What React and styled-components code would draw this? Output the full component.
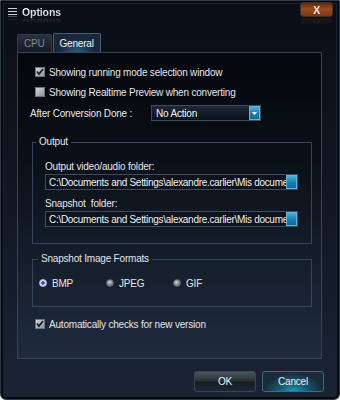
import React from 'react';
import styled, { createGlobalStyle } from 'styled-components';

const GlobalStyle = createGlobalStyle`
  html, body {
    margin: 0;
    padding: 0;
    background: #ffffff;
  }
  body {
    font-family: "Liberation Sans", Arial, sans-serif;
    font-size: 10px;
    letter-spacing: -0.2px;
  }
`;

const Window = styled.div`
  width: 340px;
  height: 400px;
  box-sizing: border-box;
  border: 1px solid #2f3a48;
  border-radius: 0 0 6px 6px;
  background: linear-gradient(180deg, #0a0e16 0%, #0f1520 40%, #1a2434 100%);
  box-shadow: inset 0 0 0 2px #06090e, inset 0 0 0 3px #1a2230;
  display: flex;
  flex-direction: column;
  overflow: hidden;
  color: #e2e5e9;
`;

const TitleBar = styled.div`
  height: 30px;
  display: flex;
  align-items: flex-start;
  padding: 1px 6px 0 7px;
`;

const MenuIcon = styled.div`
  margin-top: 6px;
  width: 9px;
  display: flex;
  flex-direction: column;
  gap: 2px;
  -webkit-box-reflect: below 1px linear-gradient(transparent 30%, rgba(255, 255, 255, 0.35));

  span {
    height: 1px;
    background: #c8d0da;
  }
`;

const Title = styled.div`
  margin: 3px 0 0 5px;
  font-weight: bold;
  font-size: 10.5px;
  letter-spacing: -0.1px;
  line-height: 14px;
  background: linear-gradient(180deg, #ffffff 20%, #a9c2dc 100%);
  -webkit-background-clip: text;
  background-clip: text;
  color: transparent;
  -webkit-box-reflect: below -3px linear-gradient(transparent 45%, rgba(255, 255, 255, 0.3));
`;

const CloseButton = styled.div`
  margin-left: auto;
  width: 33px;
  height: 15px;
  box-sizing: border-box;
  border: 1px solid #4a2a18;
  border-radius: 3px;
  background: linear-gradient(180deg, #5a2a12 0%, #9c4a1e 45%, #7a3616 100%);
  color: #eee6e0;
  font-weight: bold;
  font-size: 11px;
  display: flex;
  align-items: center;
  justify-content: center;
  -webkit-box-reflect: below 1px linear-gradient(transparent 55%, rgba(255, 255, 255, 0.25));
`;

const TabRow = styled.div`
  display: flex;
  align-items: flex-end;
  margin-left: 16px;
  height: 19px;
  margin-top: 1px;
`;

const Tab = styled.div`
  height: ${(p) => (p.$active ? '19px' : '18px')};
  box-sizing: border-box;
  padding: 0 ${(p) => (p.$active ? '6px' : '6px')};
  margin-right: 1px;
  display: flex;
  align-items: center;
  border: 1px solid ${(p) => (p.$active ? '#4a5a70' : '#333d4a')};
  border-bottom: none;
  border-radius: 2px 2px 0 0;
  color: ${(p) => (p.$active ? '#f2f4f6' : '#7d858f')};
  background: ${(p) =>
    p.$active
      ? 'radial-gradient(ellipse at 50% 110%, #2a5f88 0%, #18283c 55%, #1c2636 100%)'
      : 'linear-gradient(180deg, #2a323e 0%, #141a24 100%)'};
`;

const Panel = styled.div`
  margin: 0 17px 0 16px;
  height: 307px;
  box-sizing: border-box;
  border: 1px solid #34445a;
  background: linear-gradient(180deg, #04070c 0%, #0a1018 35%, #1f2b3e 100%);
  display: flex;
  flex-direction: column;
  padding-top: 9px;
`;

const CheckRow = styled.label`
  display: flex;
  align-items: center;
  height: 20px;
  margin-left: 17px;
  margin-top: ${(p) => p.$mt || 0}px;
  gap: 4px;
`;

const Box = styled.span`
  width: 10px;
  height: 10px;
  box-sizing: border-box;
  border: 1px solid #6e747c;
  background: linear-gradient(135deg, #d4d8dc 0%, #8e949b 100%);
  display: flex;
  align-items: center;
  justify-content: center;
`;

const Checkbox = ({ checked }) => (
  <Box>
    {checked && (
      <svg width="8" height="8" viewBox="0 0 8 8">
        <path d="M1 3.5 L3 6 L7 1" stroke="#1c2026" strokeWidth="1.8" fill="none" />
      </svg>
    )}
  </Box>
);

const SelectRow = styled.div`
  display: flex;
  align-items: center;
  margin: 3px 0 0 12px;
`;

const SelectLabel = styled.span`
  width: 121px;
`;

const Select = styled.div`
  width: 110px;
  height: 16px;
  box-sizing: border-box;
  border: 1px solid #3e4c5e;
  background: linear-gradient(180deg, #1e2838 0%, #0c111a 100%);
  display: flex;
  align-items: center;
  padding-left: 4px;
  color: #f0f2f4;
`;

const BlueButton = styled.span`
  flex: none;
  margin-left: auto;
  width: 11px;
  height: 14px;
  box-sizing: border-box;
  border: 1px solid #5fb4dc;
  background: linear-gradient(180deg, #4cb0dc 0%, #1a84b8 50%, #0f6898 100%);
  display: flex;
  align-items: center;
  justify-content: center;
`;

const Group = styled.fieldset`
  margin: ${(p) => p.$mt}px 0 0 14px;
  width: 280px;
  box-sizing: border-box;
  border: 1px solid #34465e;
  padding: 0 13px ${(p) => p.$pb}px 12px;
  min-width: 0;
`;

const Legend = styled.legend`
  margin-left: ${(p) => p.$ml}px;
  padding: 0 3px;
  line-height: 14px;
  color: #e2e5e9;
`;

const FieldLabel = styled.div`
  line-height: 14px;
  margin-top: ${(p) => p.$mt}px;
`;

const PathInput = styled.div`
  height: 16px;
  box-sizing: border-box;
  border: 1px solid #3e4c5e;
  background: #0d131c;
  display: flex;
  align-items: center;
  padding-left: 3px;
  color: #eef0f2;
`;

const PathText = styled.span`
  flex: 1;
  min-width: 0;
  white-space: nowrap;
  overflow: hidden;
  letter-spacing: -0.3px;
`;

const RadioRow = styled.div`
  display: flex;
  align-items: center;
  height: 14px;
  margin-top: 10px;
  margin-left: -6px;
`;

const RadioItem = styled.label`
  display: flex;
  align-items: center;
  gap: 5px;
  width: ${(p) => p.$w}px;
`;

const Radio = styled.span`
  width: 8px;
  height: 8px;
  border-radius: 50%;
  box-sizing: border-box;
  background: ${(p) =>
    p.$on
      ? 'radial-gradient(circle at 50% 50%, #1c4fd8 0%, #1c4fd8 35%, #e8eef6 45%, #9aa6b4 100%)'
      : 'radial-gradient(circle at 40% 35%, #c8ccd2 0%, #80868e 60%, #4a5058 100%)'};
  border: 1px solid ${(p) => (p.$on ? '#b8c6d8' : '#5c636c')};
`;

const Footer = styled.div`
  display: flex;
  justify-content: flex-end;
  gap: 6px;
  margin: 12px 15px 0 0;
`;

const Button = styled.div`
  width: 62px;
  height: 21px;
  box-sizing: border-box;
  border: 1px solid ${(p) => (p.$focus ? '#3e6c80' : '#3c444e')};
  border-radius: 3px;
  display: flex;
  align-items: center;
  justify-content: center;
  color: #eef2f4;
  background: ${(p) =>
    p.$focus
      ? 'radial-gradient(ellipse at 50% 110%, #1ea4c8 0%, #145a74 35%, #1a2a36 70%), linear-gradient(180deg, #4a545e, #141c24)'
      : 'linear-gradient(180deg, #4c545c 0%, #2a3038 48%, #161c22 52%, #1a2a34 100%)'};
`;

const App = () => {
  const path = 'C:\\Documents and Settings\\alexandre.carlier\\Mis documents';
  return (
    <>
      <GlobalStyle />
      <Window>
        <TitleBar>
          <MenuIcon>
            <span />
            <span />
            <span />
          </MenuIcon>
          <Title>Options</Title>
          <CloseButton>X</CloseButton>
        </TitleBar>
        <TabRow>
          <Tab>CPU</Tab>
          <Tab $active>General</Tab>
        </TabRow>
        <Panel>
          <CheckRow>
            <Checkbox checked />
            Showing running mode selection window
          </CheckRow>
          <CheckRow>
            <Checkbox />
            Showing Realtime Preview when converting
          </CheckRow>
          <SelectRow>
            <SelectLabel>After Conversion Done :</SelectLabel>
            <Select>
              No Action
              <BlueButton>
                <svg width="5" height="3" viewBox="0 0 5 3">
                  <path d="M0 0 H5 L2.5 3 Z" fill="#ffffff" />
                </svg>
              </BlueButton>
            </Select>
          </SelectRow>
          <Group $mt={14} $pb={16}>
            <Legend $ml={-9}>Output</Legend>
            <FieldLabel $mt={11}>Output video/audio folder:</FieldLabel>
            <PathInput>
              <PathText>{path}</PathText>
              <BlueButton />
            </PathInput>
            <FieldLabel $mt={7}>Snapshot&nbsp; folder:</FieldLabel>
            <PathInput>
              <PathText>{path}</PathText>
              <BlueButton />
            </PathInput>
          </Group>
          <Group $mt={8} $pb={16}>
            <Legend $ml={-7}>Snapshot Image Formats</Legend>
            <RadioRow>
              <RadioItem $w={67}>
                <Radio $on />
                BMP
              </RadioItem>
              <RadioItem $w={67}>
                <Radio />
                JPEG
              </RadioItem>
              <RadioItem $w={60}>
                <Radio />
                GIF
              </RadioItem>
            </RadioRow>
          </Group>
          <CheckRow $mt={7}>
            <Checkbox checked />
            Automatically checks for new version
          </CheckRow>
        </Panel>
        <Footer>
          <Button>OK</Button>
          <Button $focus>Cancel</Button>
        </Footer>
      </Window>
    </>
  );
};

export default App;
